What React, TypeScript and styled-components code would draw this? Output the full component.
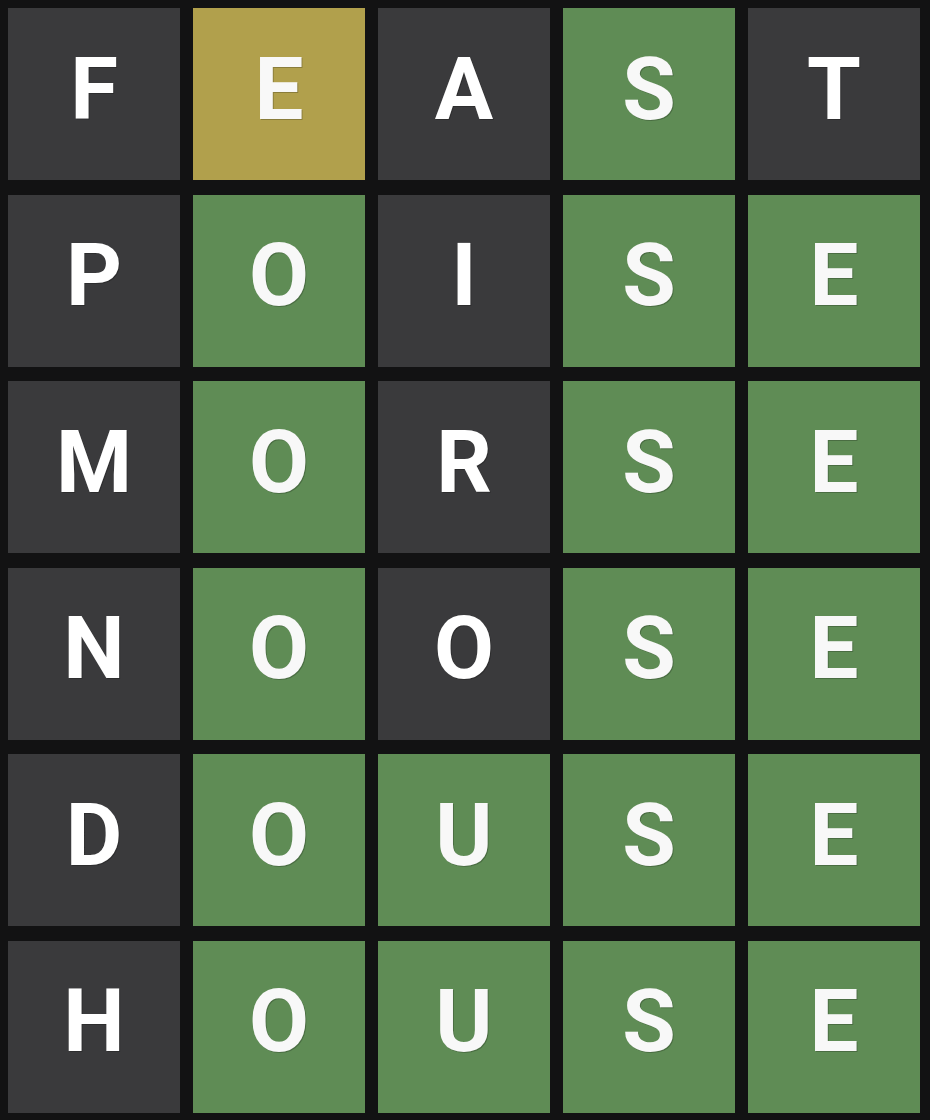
import React from "react";
import styled, { createGlobalStyle } from "styled-components";

const Global = createGlobalStyle`
  html, body { margin: 0; padding: 0; background: #121213; }
  body { width: 930px; height: 1120px; overflow: hidden; }
`;

type State = "absent" | "present" | "correct";

const colors: Record<State, string> = {
  absent: "#3a3a3c",
  present: "#b1a04c",
  correct: "#5f8c55",
};

const Board = styled.div`
  display: grid;
  grid-template-columns: repeat(5, 172px);
  grid-template-rows: repeat(6, 172px);
  column-gap: 13px;
  row-gap: 14.6px;
  padding: 8px 10px 7px 8px;
  background: #121213;
  width: 930px;
  height: 1120px;
  box-sizing: border-box;
`;

const Tile = styled.div<{ $state: State }>`
  background: ${(p) => colors[p.$state]};
  display: flex;
  align-items: center;
  justify-content: center;
  font-family: Roboto, "Liberation Sans", sans-serif;
  font-weight: 700;
  font-size: 87px;
  line-height: 1;
  color: ${(p) => (p.$state === "absent" ? "#ffffff" : "#f8f8f8")};
  text-shadow: 1px 1px 0 rgba(0, 0, 0, 0.22);
  padding-bottom: 10px;
  box-sizing: border-box;
`;

const rows: { word: string; states: State[] }[] = [
  { word: "FEAST", states: ["absent", "present", "absent", "correct", "absent"] },
  { word: "POISE", states: ["absent", "correct", "absent", "correct", "correct"] },
  { word: "MORSE", states: ["absent", "correct", "absent", "correct", "correct"] },
  { word: "NOOSE", states: ["absent", "correct", "absent", "correct", "correct"] },
  { word: "DOUSE", states: ["absent", "correct", "correct", "correct", "correct"] },
  { word: "HOUSE", states: ["absent", "correct", "correct", "correct", "correct"] },
];

export default function App() {
  return (
    <>
      <Global />
      <Board>
        {rows.flatMap((r, ri) =>
          r.word.split("").map((ch, ci) => (
            <Tile key={`${ri}-${ci}`} $state={r.states[ci]}>
              {ch}
            </Tile>
          ))
        )}
      </Board>
    </>
  );
}
